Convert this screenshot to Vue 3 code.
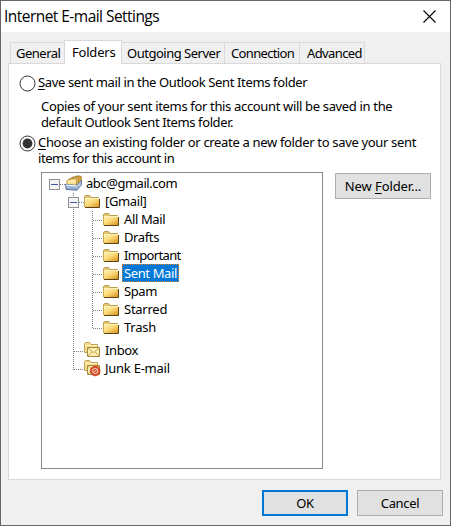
<script setup>
const tabs = [
  { label: 'General', cls: 'general' },
  { label: 'Folders', cls: 'folders active' },
  { label: 'Outgoing Server', cls: 'outgoing' },
  { label: 'Connection', cls: 'connection' },
  { label: 'Advanced', cls: 'advanced' },
]

const nodes = [
  { label: 'abc@gmail.com', icon: 'store', depth: 0, open: true, cls: 'root' },
  { label: '[Gmail]', icon: 'folder', depth: 1, open: true },
  { label: 'All Mail', icon: 'folder', depth: 2 },
  { label: 'Drafts', icon: 'folder', depth: 2 },
  { label: 'Important', icon: 'folder', depth: 2, cls: 'tight' },
  { label: 'Sent Mail', icon: 'folder', depth: 2, selected: true },
  { label: 'Spam', icon: 'folder', depth: 2 },
  { label: 'Starred', icon: 'folder', depth: 2, cls: 'loose' },
  { label: 'Trash', icon: 'folder', depth: 2, last: true, cls: 'loose' },
  { label: 'Inbox', icon: 'inbox', depth: 1, gap: true },
  { label: 'Junk E-mail', icon: 'junk', depth: 1, last: true, cls: 'loose' },
]

const indent = [23, 42, 61]
</script>

<template>
  <div class="window">
    <header class="titlebar">
      <h1>Internet E-mail Settings</h1>
      <svg class="close" width="13" height="13" viewBox="0 0 13 13">
        <path d="M.5 .5l12 12M12.5 .5l-12 12" stroke="#000" stroke-width="1.1" />
      </svg>
    </header>

    <nav class="tabs">
      <div v-for="t in tabs" :key="t.label" class="tab" :class="t.cls"><span>{{ t.label }}</span></div>
    </nav>

    <main class="panel">
      <label class="option first">
        <svg class="radio" width="17" height="17"><circle cx="8.5" cy="8.5" r="7.5" fill="#fff" stroke="#333" /></svg>
        <span class="t-save"><u>S</u>ave sent mail in the Outlook Sent Items folder</span>
      </label>
      <p class="note">
        <span class="t-copies">Copies of your sent items for this account will be saved in the</span><br />
        <span class="t-default">default Outlook Sent Items folder.</span>
      </p>
      <label class="option second">
        <svg class="radio" width="17" height="17">
          <circle cx="8.5" cy="8.5" r="7.5" fill="#fff" stroke="#333" />
          <circle cx="8.5" cy="8.5" r="4.9" fill="#333" />
        </svg>
        <span>
          <span class="t-choose"><u>C</u>hoose an existing folder or create a new folder to save your sent</span><br />
          <span class="t-items">items for this account in</span>
        </span>
      </label>

      <div class="chooser">
        <div class="tree">
          <div v-for="n in nodes" :key="n.label" class="row" :class="{ gap: n.gap }">
            <svg class="guides" :width="indent[n.depth]" :height="n.gap ? 23 : 18" shape-rendering="crispEdges">
              <g class="dots">
                <template v-if="n.depth === 0">
                  <path d="M18 9.5h5" />
                </template>
                <template v-else-if="n.depth === 1">
                  <path v-if="n.gap" d="M31.5 0v23M32 14.5h10" />
                  <path v-else-if="n.last" d="M31.5 1v9M32 9.5h10" />
                  <path v-else d="M31.5 0v18M37 9.5h5" />
                </template>
                <template v-else>
                  <path d="M31.5 0v18" />
                  <path :d="n.last ? 'M50.5 0v10' : 'M50.5 0v18'" />
                  <path d="M51 9.5h10" />
                </template>
              </g>
              <g v-if="n.open" :transform="n.depth ? 'translate(19 0)' : ''">
                <rect x="7.5" y="4.5" width="10" height="10" fill="#f4f4f4" stroke="#919191" />
                <path d="M9 9.5h7" stroke="#3e58a8" />
              </g>
            </svg>

            <svg class="icon" width="17" height="17" viewBox="0 0 17 17">
              <defs>
                <linearGradient id="gold" x1="0" y1="0" x2="1" y2="1">
                  <stop offset="0" stop-color="#fff0b0" />
                  <stop offset=".45" stop-color="#fbd978" />
                  <stop offset="1" stop-color="#d8921a" />
                </linearGradient>
                <linearGradient id="tray" x1="0" y1="0" x2="0" y2="1">
                  <stop offset="0" stop-color="#e6effa" />
                  <stop offset="1" stop-color="#7f9cc4" />
                </linearGradient>
              </defs>
              <template v-if="n.icon === 'folder'">
                <path d="M.5 13.5v-10l1-1h4l1.5 2h7.5v9z" fill="#e2c46c" stroke="#b79c50" />
                <path d="M1 6h14v8h-14z" fill="url(#gold)" />
                <path d="M1 5.5h14" stroke="#fff3c0" />
                <path d="M.5 14V5" stroke="#c9a94f" />
                <path d="M1 14.5h14.5V6" fill="none" stroke="#5a4414" />
              </template>
              <template v-else-if="n.icon === 'store'">
                <path d="M6.5 8V3l1-1h3l.7-1h4.3l.8.8V9l-4 4z" fill="#dfa63a" stroke="#94702c" stroke-width=".8" />
                <path d="M4.5 9V4l1-1h3l.7-.8h4v8l-2 2z" fill="#f8d06a" stroke="#a07a30" stroke-width=".8" />
                <path d="M2 10V5.5l1-1h3l.8-.8h4.7v8z" fill="#fbe08b" stroke="#a98338" stroke-width=".8" />
                <path d="M3 6.3h7.5" stroke="#fff6cf" />
                <path d="M.6 9.3l10.9 1 4.8-5v4.8l-4.6 5.2-10.7-.9z" fill="url(#tray)" stroke="#42618f" stroke-width=".8" />
                <path d="M1.2 10l10.4 1" stroke="#fff" />
              </template>
              <template v-else>
                <path d="M.5 10.5v-9l1-1h4l1.5 2h6.5v8z" fill="#f7dd8a" stroke="#bda359" />
                <path d="M1 3.5h12" stroke="#fff3c0" />
                <path d="M3.5 5.5h12v9h-12z" fill="#fdf0b4" stroke="#a98a3c" />
                <path d="M4 6l5.5 4.7L15 6M4 14l4-4.2M15 14l-4-4.2" fill="none" stroke="#c8a54e" />
                <g v-if="n.icon === 'junk'">
                  <circle cx="11.2" cy="11" r="4.9" fill="#dd4a26" stroke="#c23c1c" stroke-width=".6" />
                  <circle cx="11.2" cy="11" r="2.6" fill="none" stroke="#fbd9cc" />
                  <path d="M9.4 12.8l3.6-3.6" stroke="#fbd9cc" />
                </g>
              </template>
            </svg>
            <span class="name" :class="[n.cls, { selected: n.selected }]">{{ n.label }}</span>
          </div>
        </div>
        <button class="btn new"><span>New <u>F</u>older...</span></button>
      </div>
    </main>

    <footer class="actions">
      <button class="btn ok">OK</button>
      <button class="btn cancel">Cancel</button>
    </footer>
  </div>
</template>

<style>
body { margin: 0; }
</style>

<style scoped>
* { box-sizing: border-box; }
.window {
  width: 451px;
  height: 526px;
  border: 1px solid #676568;
  background: #f0f0f0;
  color: #000;
  font: 13px/16px "Noto Sans", sans-serif;
  white-space: nowrap;
  display: flex;
  flex-direction: column;
}
.titlebar {
  height: 31px;
  background: #fff;
  display: flex;
  justify-content: space-between;
  align-items: center;
  padding: 0 14px 0 3px;
}
h1 { margin: 0; padding-bottom: 1px; font: 15.5px/20px "Open Sans", sans-serif; letter-spacing: -0.54px; }
.tabs { display: flex; align-items: flex-end; height: 31px; padding-left: 9px; }
.tab {
  height: 21px;
  border: 1px solid #d9d9d9;
  border-bottom: 0;
  border-left: 0;
  padding-left: 5px;
  display: flex;
  align-items: center;
}
.general { width: 54px; border-left: 1px solid #d9d9d9; border-right: 0; letter-spacing: -0.5px; }
.folders { width: 58px; padding-left: 7px; border-left: 1px solid #d9d9d9; letter-spacing: -0.2px; }
.outgoing { width: 103px; letter-spacing: -0.49px; }
.connection { width: 75px; padding-left: 6px; letter-spacing: -0.65px; }
.advanced { width: 65px; padding-left: 7px; letter-spacing: -0.6px; }
.active { height: 24px; margin-bottom: -1px; background: #fff; position: relative; padding-bottom: 2px; }
.panel {
  width: 433px;
  height: 417px;
  margin-left: 7px;
  border: 1px solid #d9d9d9;
  background: #fff;
}
u { text-underline-offset: 2px; text-decoration-thickness: 1px; }
.option { display: flex; gap: 2px; padding-left: 10px; }
.first { margin-top: 10px; height: 24px; }
.radio { flex: none; margin-top: 1px; }
.note { margin: 0 0 0 32px; height: 36px; }
.second { height: 38px; }
.t-save { letter-spacing: -0.37px; }
.t-copies { letter-spacing: -0.34px; }
.t-default { letter-spacing: -0.39px; }
.t-choose { letter-spacing: -0.33px; }
.t-items { letter-spacing: -0.43px; }
.chooser { display: flex; gap: 12px; align-items: flex-start; padding-left: 32px; }
.tree { width: 282px; height: 297px; border: 1px solid #828790; padding-top: 2px; }
.row { display: flex; height: 18px; align-items: flex-end; }
.gap { height: 23px; }
.guides { flex: none; }
.dots { stroke: #808080; stroke-dasharray: 1 1; fill: none; }
.icon { flex: none; margin-bottom: 1px; }
.name {
  height: 18px;
  line-height: 18px;
  padding: 0 2px;
  margin: 0 0 1px 2px;
  letter-spacing: -0.38px;
}
.root { letter-spacing: -0.46px; }
.tight { letter-spacing: -0.66px; }
.loose { letter-spacing: -0.25px; }
.selected { background: #0078d7; color: #fff; outline: 1px dotted #d88428; outline-offset: -1px; }
.btn {
  margin: 0;
  padding: 0;
  height: 26px;
  border: 1px solid #adadad;
  background: #e1e1e1;
  color: #000;
  font: inherit;
}
.new { width: 96px; margin-top: 1px; letter-spacing: -0.1px; }
.actions { display: flex; justify-content: flex-end; gap: 9px; padding: 10px 7px 0 0; }
.ok { width: 86px; border: 2px solid #0078d7; letter-spacing: -0.3px; }
.cancel { width: 86px; letter-spacing: -0.35px; }
</style>
